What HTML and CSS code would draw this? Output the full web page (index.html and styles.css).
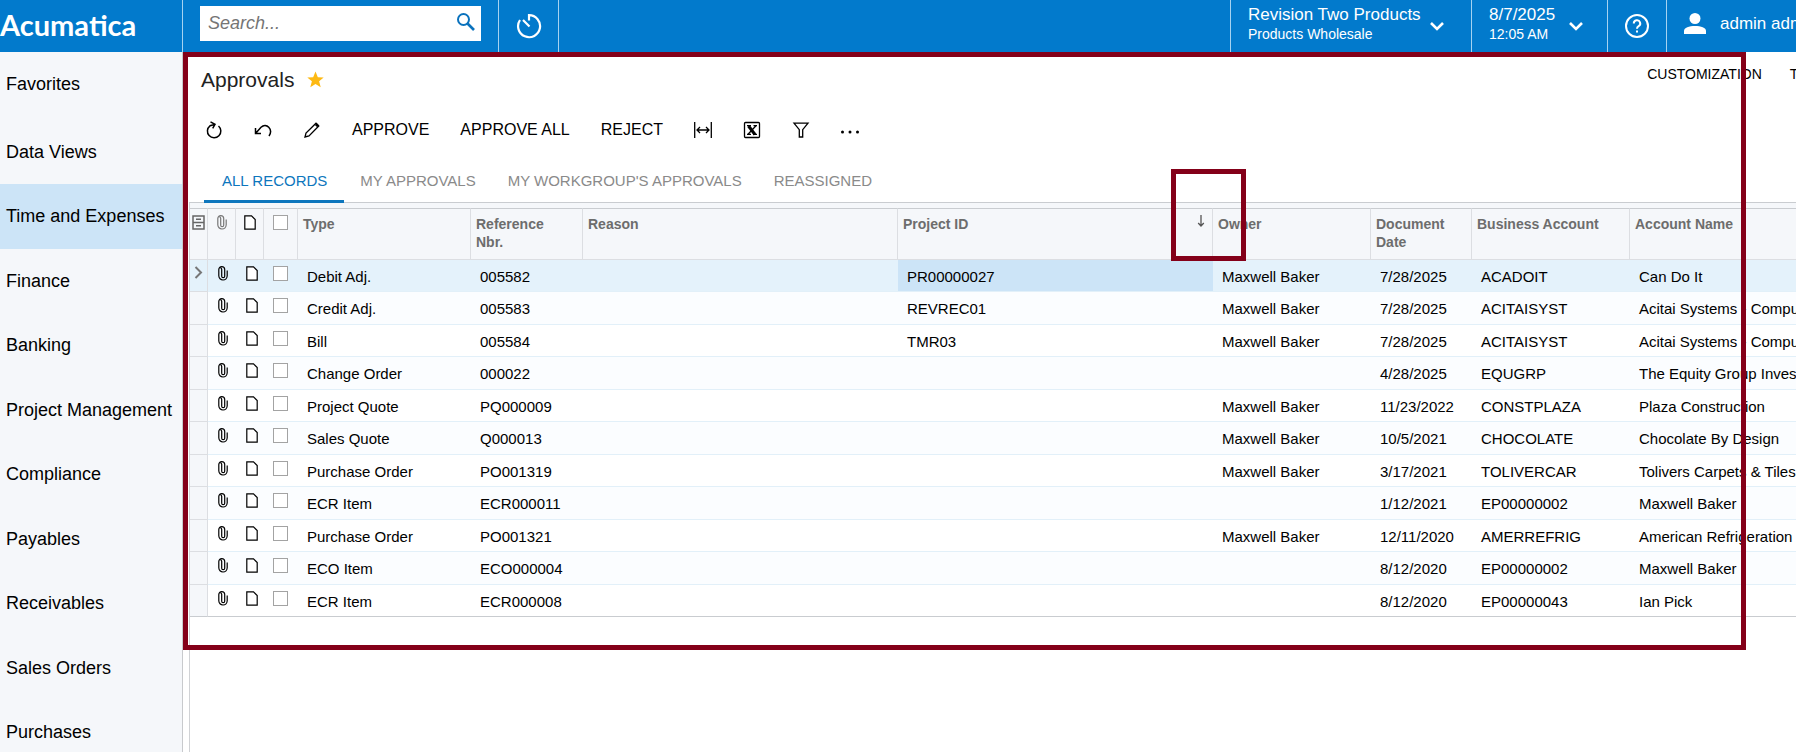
FILE: index.html
```html
<!DOCTYPE html>
<html lang="en">
  <head>
    <title>Approvals</title>
    <meta charset="UTF-8">
    <meta name="viewport" content="width=device-width, initial-scale=1.0">
    <link rel="stylesheet" href="styles.css">
  </head>
  <body>
    <!--icons used more than once-->
    <svg class="sprite" aria-hidden="true">
      <symbol id="clip" viewBox="0 0 10 15">
        <path d="M6.700 4.500v5.700a1.500 1.500 0 0 1-3 0V3.300a2 2 0 0 0-1.200-1.500M.8 9.800V3.600a2.900 2.900 0 0 1 5.900 0v1.500M.8 9.800a4.200 4.200 0 0 0 8.400 0V4.500" fill="none" stroke="currentColor" stroke-width="1.200"/>
      </symbol>
      <symbol id="note" viewBox="0 0 12 15">
        <path d="M.8.8h6.700l3.700 3.700v9.700H.8z" fill="#fff" stroke="#000" stroke-width="1.200"/>
      </symbol>
      <symbol id="chevron" viewBox="0 0 14 9">
        <path d="M1 1l6 6 6-6" fill="none" stroke="#fff" stroke-width="2.6"/>
      </symbol>
    </svg>

    <header class="topbar">
      <a class="logo" href="#">Acumatica</a>
      <form class="search">
        <input type="text" placeholder="Search..." aria-label="Search">
        <button type="button" aria-label="Search">
          <svg width="20" height="20" viewBox="0 0 20 20"><circle cx="8.500" cy="7.500" r="5.500" fill="none" stroke="#0a72bd" stroke-width="2"/><path d="M12.500 11.500l6.500 6.500" stroke="#0a72bd" stroke-width="2.6"/></svg>
        </button>
      </form>
      <button class="top-icon history" aria-label="Recently visited">
        <svg width="26" height="26" viewBox="0 0 26 26" fill="none" stroke="#fff" stroke-width="2.200"><path d="M13 7.500V2.200a11 11 0 1 1-9 4.800M7 7l6.500 6.500"/></svg>
      </button>
      <div class="spacer"></div>
      <button class="top-menu company">
        <span class="lines"><span class="big">Revision Two Products</span><span class="small">Products Wholesale</span></span>
        <svg width="14" height="9"><use href="#chevron"/></svg>
      </button>
      <button class="top-menu date">
        <span class="lines"><span class="big">8/7/2025</span><span class="small">12:05 AM</span></span>
        <svg width="14" height="9"><use href="#chevron"/></svg>
      </button>
      <button class="top-icon help" aria-label="Help">
        <svg width="26" height="26" viewBox="0 0 26 26" fill="none" stroke="#fff" stroke-width="2"><circle cx="13" cy="13" r="11"/><path d="M9.800 10.500a3.200 3.200 0 1 1 4.800 2.700c-1.200.7-1.600 1.200-1.600 2.600M13 17.500v2"/></svg>
      </button>
      <button class="top-menu user">
        <svg width="22" height="22" viewBox="0 0 22 22" fill="#fff"><circle cx="11" cy="5.500" r="5.500"/><path d="M0 21v-3c0-3.500 5-5 11-5s11 1.500 11 5v3z"/></svg>
        <span class="big">admin admin</span>
      </button>
    </header>

    <div class="page">
      <nav class="sidebar">
        <a href="#">Favorites</a>
        <a href="#">Data Views</a>
        <a href="#" class="active">Time and Expenses</a>
        <a href="#">Finance</a>
        <a href="#">Banking</a>
        <a href="#">Project Management</a>
        <a href="#">Compliance</a>
        <a href="#">Payables</a>
        <a href="#">Receivables</a>
        <a href="#">Sales Orders</a>
        <a href="#">Purchases</a>
      </nav>

      <main class="content">
        <div class="title-row">
          <h1>Approvals</h1>
          <svg class="star" width="17" height="17" viewBox="0 0 16 16"><path d="M8 .5l2.200 5.300 5.500.3-4.300 3.600 1.500 5.600L8 12.200l-4.900 3.100 1.500-5.600L.3 6.100l5.500-.3z" fill="#fdb913"/></svg>
          <div class="spacer"></div>
          <a href="#">CUSTOMIZATION</a>
          <a href="#">TOOLS</a>
        </div>

        <div class="toolbar">
          <button aria-label="Refresh"><svg width="18" height="18" viewBox="0 0 18 18" fill="none" stroke="#000" stroke-width="1.500"><path d="M13.500 5a6.700 6.700 0 1 1-8.500-.2L9.500 3.500M5.500.8l4.500 2.500-2.300 4"/></svg></button>
          <button aria-label="Undo"><svg width="18" height="18" viewBox="0 0 18 18" fill="none" stroke="#000" stroke-width="1.500"><path d="M1.500 12.500L7 6.200c5.500-5 12.500 2.300 8 8.800M1.500 7v5.500h5.500"/></svg></button>
          <button aria-label="Edit"><svg width="18" height="18" viewBox="0 0 18 18" fill="none" stroke="#000" stroke-width="1.300"><path d="M2 16l1-4L13 2.200l2.800 2.800L6 15z"/><path d="M12.800 3l2.300 2.300" stroke-width="2.600"/></svg></button>
          <button>APPROVE</button>
          <button>APPROVE ALL</button>
          <button>REJECT</button>
          <button aria-label="Fit to screen"><svg width="18" height="18" viewBox="0 0 18 18" fill="none" stroke="#000" stroke-width="1.300"><path d="M.7 1v16M17.300 1v16M3 9h12M6 6L3 9l3 3M12 6l3 3-3 3"/></svg></button>
          <button aria-label="Export to Excel"><svg width="18" height="18" viewBox="0 0 18 18" fill="none" stroke="#000"><rect x="1.500" y="1.500" width="15" height="15" rx="1" stroke-width="1.300"/><path d="M5.500 5l6.500 8.500" stroke-width="3"/><path d="M13 4.700L5 13.300M4 4.700h4M10.500 4.700h3.500M4 13.300h4M10 13.300h4" stroke-width="1.300"/></svg></button>
          <button aria-label="Filter"><svg width="18" height="18" viewBox="0 0 18 18" fill="none" stroke="#000" stroke-width="1.300"><path d="M2 2.200h14l-5.300 6.500V16H7.300V8.700z"/></svg></button>
          <button aria-label="More"><svg width="20" height="18" viewBox="0 0 20 18"><circle cx="1.500" cy="11" r="1.500"/><circle cx="9" cy="11" r="1.500"/><circle cx="16.500" cy="11" r="1.500"/></svg></button>
        </div>

        <div class="tabs">
          <button class="active">ALL RECORDS</button>
          <button>MY APPROVALS</button>
          <button>MY WORKGROUP'S APPROVALS</button>
          <button>REASSIGNED</button>
        </div>

        <div class="grid">
          <table>
            <colgroup>
              <col class="c-mark"><col class="c-icon"><col class="c-icon"><col class="c-check">
              <col class="c-type"><col class="c-ref"><col class="c-wide"><col class="c-wide">
              <col class="c-owner"><col class="c-date"><col class="c-owner"><col>
            </colgroup>
            <thead>
              <tr>
                <th class="ic"><svg width="13" height="15" viewBox="0 0 13 15" fill="none" stroke="#666" stroke-width="1.500"><path d="M1 1h11v13H1zM1 7.500h11M4 4.300h5M4 10.800h5"/></svg></th>
                <th class="ic gray"><svg width="10" height="15"><use href="#clip"/></svg></th>
                <th class="ic"><svg width="12" height="15"><use href="#note"/></svg></th>
                <th class="ic"><input type="checkbox" aria-label="Select all"></th>
                <th>Type</th>
                <th>Reference<br>Nbr.</th>
                <th>Reason</th>
                <th><span class="sorted">Project ID <svg width="8" height="12" viewBox="0 0 8 12" fill="none" stroke="#555" stroke-width="1.300"><path d="M4 0v11M1.200 8L4 11l2.800-3"/></svg></span></th>
                <th>Owner</th>
                <th>Document<br>Date</th>
                <th>Business Account</th>
                <th>Account Name</th>
              </tr>
            </thead>
            <tbody id="rows"></tbody>
          </table>
        </div>
      </main>
    </div>

    <div class="mark mark-screen"></div>
    <div class="mark mark-sort"></div>

    <script src="script.js"></script>
  </body>
</html>
```
FILE: styles.css
```css
* {
  box-sizing: border-box;
}
body,html{
  height:100%;
}
body {
  font-family: "Liberation Sans", Arial, Helvetica, sans-serif;
  margin: 0;
  color:#000;
  background:white;
  display:flex;
  flex-direction:column;
  overflow:hidden;
}
button{
  font:inherit;
  color:inherit;
  background:none;
  border:0;
  padding:0;
  cursor:pointer;
}
a{
  color:inherit;
  text-decoration:none;
}
svg{
  display:block;
  flex:none;
}
.sprite{
  position:absolute;
  width:0;
  height:0;
}
.spacer{
  flex:1;
}

/* Top bar */
.topbar{
  flex:none;
  display:flex;
  height:52px;
  background:#027acc;
  color:white;
  overflow:hidden;
}
.logo{
  width:182px;
  font-family:Lato, "Liberation Sans", sans-serif;
  font-size:29px;
  font-weight:bold;
  line-height:49px;
}
.search{
  display:flex;
  width:316px;
  margin:0;
  padding:6px 17px 11px;
  border-left:1px solid #a6d3f1;
}
.search input{
  flex:1;
  min-width:0;
  border:0;
  padding:0 0 0 8px;
  font:italic 18px "Liberation Sans", Arial, sans-serif;
  background:white;
}
.search input::placeholder{
  color:#757575;
}
.search button{
  width:26px;
  padding-bottom:4px;
  background:white;
}
.top-icon{
  display:flex;
  justify-content:center;
  align-items:center;
  width:60px;
  border-left:1px solid #a6d3f1;
}
.history{
  width:61px;
  border-right:1px solid #a6d3f1;
}
.help{
  width:59px;
}
.top-menu{
  display:flex;
  align-items:center;
  gap:9px;
  padding-left:17px;
  border-left:1px solid #a6d3f1;
  text-align:left;
  white-space:nowrap;
}
.company{
  width:241px;
}
.date{
  width:136px;
  gap:14px;
}
.user{
  width:130px;
  gap:14px;
  padding:0 0 4px 17px;
}
.lines{
  display:flex;
  flex-direction:column;
  padding-bottom:4px;
}
.big{
  font-size:17px;
  line-height:20px;
}
.small{
  font-size:14px;
  line-height:18px;
}

/* Left menu */
.page{
  flex:1;
  display:flex;
  min-height:0;
}
.sidebar{
  flex:none;
  width:183px;
  background:#f5f7fa;
  border-right:1px solid #c8cacd;
}
.sidebar a{
  display:flex;
  align-items:center;
  height:65px;
  padding-left:6px;
  font-size:18px;
  white-space:nowrap;
}
.sidebar a:first-child{
  margin-bottom:3px;
}
.sidebar a:nth-child(even){
  height:64px;
}
.sidebar .active{
  background:#cce4f7;
}

/* Screen title and toolbar */
.content{
  flex:1;
  min-width:0;
  display:flex;
  flex-direction:column;
  padding-left:6px;
}
.title-row{
  flex:none;
  display:flex;
  align-items:center;
  height:55px;
  margin-right:-41px;
  padding-left:12px;
}
h1{
  margin:0;
  font-size:21px;
  font-weight:normal;
  color:#222;
}
.star{
  margin-left:13px;
}
.title-row a{
  padding-bottom:12px;
  font-size:14px;
}
.title-row a + a{
  margin-left:28px;
}
.toolbar{
  flex:none;
  display:flex;
  align-items:center;
  gap:31px;
  height:45px;
  padding-left:16px;
  font-size:16px;
}
.tabs{
  flex:none;
  display:flex;
  height:51px;
  padding-left:15px;
  border-bottom:1px solid #c9ccd0;
  font-size:15px;
  color:#8a8a8a;
}
.tabs button{
  height:51px;
  padding:9px 16px 0;
  border-bottom:3px solid transparent;
}
.tabs .active{
  padding:9px 17px 0 18px;
  color:#0d76bd;
  border-color:#0d76bd;
}

/* Grid */
.grid{
  flex:1;
  border-left:1px solid #d0d2d5;
  overflow:hidden;
}
table{
  table-layout:fixed;
  width:100%;
  border-spacing:0;
  border-top:5px solid #f5f7fa;
  font-size:15px;
}
.c-mark{ width:18px; }
.c-icon{ width:28px; }
.c-check{ width:34px; }
.c-type{ width:173px; }
.c-ref{ width:112px; }
.c-wide{ width:315px; }
.c-owner{ width:158px; }
.c-date{ width:101px; }
th{
  height:52px;
  padding:6px 7px 0 5px;
  background:#f5f7fa;
  border:1px solid #dcdee2;
  border-width:1px 1px 1px 0;
  border-top-color:#c9ccd0;
  color:#6d6d6d;
  font-size:14px;
  line-height:18px;
  text-align:left;
  vertical-align:top;
}
th:last-child{
  border-right:0;
}
td{
  height:32px;
  padding:2px 0 0 9px;
  border-bottom:1px solid #e2f0f9;
  white-space:nowrap;
  line-height:18px;
}
tr:nth-child(even) td{
  height:33px;
  background:#fbfdff;
}
.ic{
  padding:6px 0 0;
  vertical-align:top;
}
.ic svg{
  margin:0 auto;
}
td.ic + td.ic svg{
  margin-left:10px;
}
.gray{
  color:#777;
}
tbody td:first-child, tbody tr:nth-child(even) td:first-child{
  background:#f5f7fa;
  border-right:1px solid #dcdee2;
  border-bottom-color:#dcdee2;
}
tbody .current td{
  background:#e4f2fb;
}
tbody .current .cell{
  background:#cce4f7;
}
tbody tr:last-child td{
  border-bottom-color:#c9ccd0;
}
.sorted{
  display:flex;
  justify-content:space-between;
}
input[type=checkbox]{
  appearance:none;
  display:block;
  width:15px;
  height:15px;
  margin:0 0 0 9px;
  border:1px solid #a3a3a3;
  background:white;
}

/* Highlight frames drawn over the screen */
.mark{
  position:absolute;
  border:5px solid #840019;
  pointer-events:none;
}
.mark-screen{
  left:183px;
  top:52px;
  right:50px;
  height:598px;
}
.mark-sort{
  left:1171px;
  top:169px;
  width:75px;
  height:92px;
}
```
FILE: script.js
```js
//type, reference, project, owner, date, account, name
var rows = [
  ["Debit Adj.", "005582", "PR00000027", "Maxwell Baker", "7/28/2025", "ACADOIT", "Can Do It"],
  ["Credit Adj.", "005583", "REVREC01", "Maxwell Baker", "7/28/2025", "ACITAISYST", "Acitai Systems - Computers"],
  ["Bill", "005584", "TMR03", "Maxwell Baker", "7/28/2025", "ACITAISYST", "Acitai Systems - Computers"],
  ["Change Order", "000022", "", "", "4/28/2025", "EQUGRP", "The Equity Group Investors"],
  ["Project Quote", "PQ000009", "", "Maxwell Baker", "11/23/2022", "CONSTPLAZA", "Plaza Construction"],
  ["Sales Quote", "Q000013", "", "Maxwell Baker", "10/5/2021", "CHOCOLATE", "Chocolate By Design"],
  ["Purchase Order", "PO001319", "", "Maxwell Baker", "3/17/2021", "TOLIVERCAR", "Tolivers Carpets & Tiles"],
  ["ECR Item", "ECR000011", "", "", "1/12/2021", "EP00000002", "Maxwell Baker"],
  ["Purchase Order", "PO001321", "", "Maxwell Baker", "12/11/2020", "AMERREFRIG", "American Refrigeration"],
  ["ECO Item", "ECO000004", "", "", "8/12/2020", "EP00000002", "Maxwell Baker"],
  ["ECR Item", "ECR000008", "", "", "8/12/2020", "EP00000043", "Ian Pick"]
];
var html = "";
for(var i = 0; i < rows.length; i++){
  var r = rows[i];
  var arrow = i == 0 ? '<svg width="9" height="13" viewBox="0 0 9 13"><path d="M1.500 1l5.500 5.500L1.500 12" fill="none" stroke="#777" stroke-width="2"/></svg>' : "";
  html += '<tr' + (i == 0 ? ' class="current"' : '') + '>';
  html += '<td class="ic">' + arrow + '</td>';
  html += '<td class="ic"><svg width="10" height="15"><use href="#clip"/></svg></td>';
  html += '<td class="ic"><svg width="12" height="15"><use href="#note"/></svg></td>';
  html += '<td class="ic"><input type="checkbox" aria-label="Select ' + r[1] + '"></td>';
  html += '<td>' + r[0] + '</td><td>' + r[1] + '</td><td></td>';
  html += '<td' + (i == 0 ? ' class="cell"' : '') + '>' + r[2] + '</td>';
  for(var j = 3; j < 7; j++){
    html += '<td>' + r[j].replace("&", "&amp;") + '</td>';
  }
  html += '</tr>';
}
document.getElementById("rows").innerHTML = html;
```
